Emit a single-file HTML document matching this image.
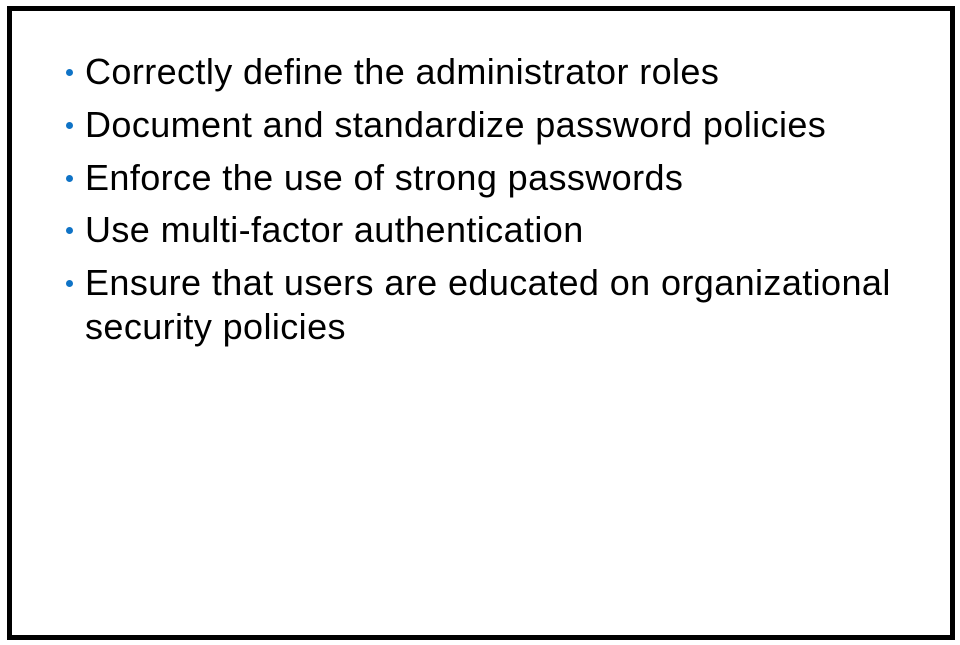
<!DOCTYPE html>
<html><head><style>
html,body{margin:0;padding:0;background:#fff;width:960px;height:645px;overflow:hidden}
.box{position:absolute;left:7px;top:6px;width:938px;height:624px;border:5px solid #000}
.l{position:absolute;left:85px;font-family:"Liberation Sans",sans-serif;font-size:36px;letter-spacing:0.4px;color:#000;white-space:nowrap;line-height:46px}
.b{position:absolute;left:66px;width:7px;height:7px;border-radius:50%;background:#0f73c6}
</style></head><body>
<div class="box"></div>
<div class="b" style="top:69px"></div><div class="l" style="top:49px">Correctly define the administrator roles</div>
<div class="b" style="top:122px"></div><div class="l" style="top:102px">Document and standardize password policies</div>
<div class="b" style="top:175px"></div><div class="l" style="top:155px">Enforce the use of strong passwords</div>
<div class="b" style="top:227px"></div><div class="l" style="top:207px">Use multi-factor authentication</div>
<div class="b" style="top:280px"></div><div class="l" style="top:260px">Ensure that users are educated on organizational</div>
<div class="l" style="top:304px">security policies</div>
</body></html>
